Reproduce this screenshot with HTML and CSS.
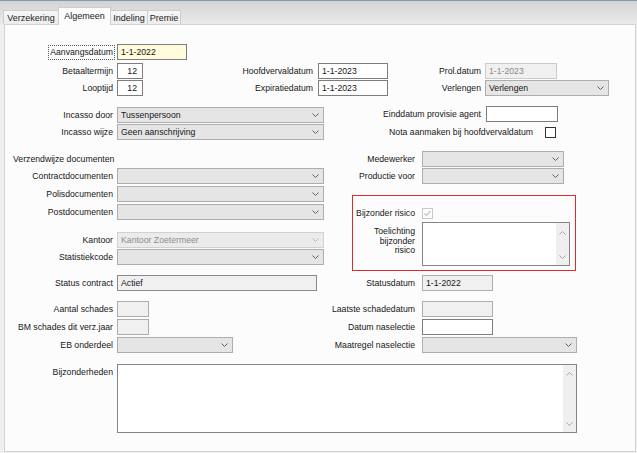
FILE: index.html
```html
<!DOCTYPE html>
<html>
<head>
<meta charset="utf-8">
<link rel="stylesheet" href="styles.css">
</head>
<body>
<div class="tabstrip">
  <div class="tab w-verz">Verzekering</div>
  <div class="tab active w-alg">Algemeen</div>
  <div class="tab w-ind">Indeling</div>
  <div class="tab w-prem">Premie</div>
</div>
<div class="panel">
  <div class="grid-a">
    <div class="lbl lbl-focus"><span class="focus">Aanvangsdatum</span></div>
    <div><div class="inp yellow w70">1-1-2022</div></div>
    <div class="fill4"></div>

    <div class="lbl">Betaaltermijn</div>
    <div><div class="inp num w26">12</div></div>
    <div class="lbl pr5">Hoofdvervaldatum</div>
    <div><div class="inp w70">1-1-2023</div></div>
    <div class="lbl">Prol.datum</div>
    <div><div class="inp dis w72">1-1-2023</div></div>

    <div class="lbl">Looptijd</div>
    <div><div class="inp num w26">12</div></div>
    <div class="lbl pr5">Expiratiedatum</div>
    <div><div class="inp w70">1-1-2023</div></div>
    <div class="lbl">Verlengen</div>
    <div><div class="select w124"><span>Verlengen</span><svg width="7" height="4" viewBox="0 0 7 4"><path d="M0.5 0.5 L3.5 3.5 L6.5 0.5" fill="none" stroke="#606060"/></svg></div></div>
  </div>

  <div class="sec-b">
    <div class="grid-b">
      <div class="lbl">Incasso door</div>
      <div><div class="select w207"><span>Tussenpersoon</span><svg width="7" height="4" viewBox="0 0 7 4"><path d="M0.5 0.5 L3.5 3.5 L6.5 0.5" fill="none" stroke="#606060"/></svg></div></div>
      <div class="lbl">Incasso wijze</div>
      <div><div class="select w207"><span>Geen aanschrijving</span><svg width="7" height="4" viewBox="0 0 7 4"><path d="M0.5 0.5 L3.5 3.5 L6.5 0.5" fill="none" stroke="#606060"/></svg></div></div>
    </div>
    <div class="b-right">
      <div class="row-end r1"><span>Einddatum provisie agent</span><div class="inp w72"></div></div>
      <div class="row-end r2"><span>Nota aanmaken bij hoofdvervaldatum</span><div class="chk"></div></div>
    </div>
  </div>

  <div class="sec-c">
    <div class="c-left">
      <div class="heading">Verzendwijze documenten</div>
      <div class="frow mt1"><div class="lbl w112">Contractdocumenten</div><div class="select w207"><span></span><svg width="7" height="4" viewBox="0 0 7 4"><path d="M0.5 0.5 L3.5 3.5 L6.5 0.5" fill="none" stroke="#606060"/></svg></div></div>
      <div class="frow mt2"><div class="lbl w112">Polisdocumenten</div><div class="select w207"><span></span><svg width="7" height="4" viewBox="0 0 7 4"><path d="M0.5 0.5 L3.5 3.5 L6.5 0.5" fill="none" stroke="#606060"/></svg></div></div>
      <div class="frow mt2"><div class="lbl w112">Postdocumenten</div><div class="select w207"><span></span><svg width="7" height="4" viewBox="0 0 7 4"><path d="M0.5 0.5 L3.5 3.5 L6.5 0.5" fill="none" stroke="#606060"/></svg></div></div>
      <div class="frow mt12"><div class="lbl w112">Kantoor</div><div class="select dis w207"><span>Kantoor Zoetermeer</span><svg width="7" height="4" viewBox="0 0 7 4"><path d="M0.5 0.5 L3.5 3.5 L6.5 0.5" fill="none" stroke="#b8b8b8"/></svg></div></div>
      <div class="frow mt1"><div class="lbl w112">Statistiekcode</div><div class="select w207"><span></span><svg width="7" height="4" viewBox="0 0 7 4"><path d="M0.5 0.5 L3.5 3.5 L6.5 0.5" fill="none" stroke="#606060"/></svg></div></div>
      <div class="frow mt10"><div class="lbl w112">Status contract</div><div class="inp ro dark w200">Actief</div></div>
    </div>
    <div class="c-right">
      <div class="frow"><div class="lbl2">Medewerker</div><div class="select w142"><span></span><svg width="7" height="4" viewBox="0 0 7 4"><path d="M0.5 0.5 L3.5 3.5 L6.5 0.5" fill="none" stroke="#606060"/></svg></div></div>
      <div class="frow mt1"><div class="lbl2">Productie voor</div><div class="select w142"><span></span><svg width="7" height="4" viewBox="0 0 7 4"><path d="M0.5 0.5 L3.5 3.5 L6.5 0.5" fill="none" stroke="#606060"/></svg></div></div>
      <div class="redbox">
        <div class="rb-row"><div class="lbl3">Bijzonder risico</div><div class="chk dis-chk"><svg width="9" height="9" viewBox="0 0 9 9"><path d="M1.5 4.5 L3.5 6.5 L7.5 2" fill="none" stroke="#c2c2c2" stroke-width="1.2"/></svg></div></div>
        <div class="rb-row2"><div class="lbl3 multi">Toelichting<br>bijzonder<br>risico</div>
          <div class="ta w148 h44"><div class="ta-body"></div><div class="sb sb-small"><svg width="7" height="4" viewBox="0 0 7 4"><path d="M0.5 3.5 L3.5 0.5 L6.5 3.5" fill="none" stroke="#a8a8a8"/></svg><svg width="7" height="4" viewBox="0 0 7 4"><path d="M0.5 0.5 L3.5 3.5 L6.5 0.5" fill="none" stroke="#a8a8a8"/></svg></div></div>
        </div>
      </div>
      <div class="frow mt4"><div class="lbl2">Statusdatum</div><div class="inp ro w71">1-1-2022</div></div>
    </div>
  </div>

  <div class="grid-d">
    <div class="lbl">Aantal schades</div>
    <div><div class="inp ro w32"></div></div>
    <div class="lbl2">Laatste schadedatum</div>
    <div><div class="inp ro w71"></div></div>

    <div class="lbl">BM schades dit verz.jaar</div>
    <div><div class="inp ro w32"></div></div>
    <div class="lbl2">Datum naselectie</div>
    <div><div class="inp w71"></div></div>

    <div class="lbl">EB onderdeel</div>
    <div><div class="select w116"><span></span><svg width="7" height="4" viewBox="0 0 7 4"><path d="M0.5 0.5 L3.5 3.5 L6.5 0.5" fill="none" stroke="#606060"/></svg></div></div>
    <div class="lbl2">Maatregel naselectie</div>
    <div><div class="select w155"><span></span><svg width="7" height="4" viewBox="0 0 7 4"><path d="M0.5 0.5 L3.5 3.5 L6.5 0.5" fill="none" stroke="#606060"/></svg></div></div>
  </div>

  <div class="sec-e">
    <div class="lbl w112 top">Bijzonderheden</div>
    <div class="ta w460 h69"><div class="ta-body"></div><div class="sb"><svg width="7" height="4" viewBox="0 0 7 4"><path d="M0.5 3.5 L3.5 0.5 L6.5 3.5" fill="none" stroke="#a8a8a8"/></svg><svg width="7" height="4" viewBox="0 0 7 4"><path d="M0.5 0.5 L3.5 3.5 L6.5 0.5" fill="none" stroke="#a8a8a8"/></svg></div></div>
  </div>
</div>
</body>
</html>
```

FILE: styles.css
```css
* { box-sizing: border-box; }
html, body { margin: 0; padding: 0; }
body {
  width: 637px;
  height: 453px;
  overflow: hidden;
  background: #efefef;
  font-family: "Liberation Sans", Arial, sans-serif;
  font-size: 8.7px;
  color: #161616;
}

/* tabs */
.tabstrip {
  height: 24px;
  border-top: 1px solid #8299b8;
  background: linear-gradient(#d3d3d3, #eaeaea);
  display: flex;
  align-items: flex-end;
  padding-left: 3px;
}
.tab {
  height: 14px;
  border: 1px solid #cdcdcd;
  border-bottom: none;
  background: linear-gradient(#f7f7f7, #ececec);
  display: flex;
  align-items: center;
  justify-content: center;
  color: #222;
  font-size: 9px;
}
.tab.active {
  height: 18px;
  margin-bottom: -1px;
  background: #fcfcfc;
  align-items: flex-start;
  padding-top: 3px;
  position: relative;
  z-index: 1;
}
.w-verz { width: 56px; }
.w-alg { width: 53px; margin-left: -1px; }
.w-ind { width: 38px; margin-left: -1px; }
.w-prem { width: 34px; margin-left: -1px; }

.panel {
  margin-left: 4px;
  width: 632px;
  height: 428px;
  border: 1px solid #d3d3d3;
  background: #fcfcfc;
}

/* generic controls */
.lbl {
  height: 16px;
  display: flex;
  align-items: center;
  justify-content: flex-end;
  padding-right: 4px;
  white-space: nowrap;
}
.lbl.pr5 { padding-right: 5px; }
.lbl.top { align-items: flex-start; padding-top: 3px; height: auto; }
.lbl2 {
  width: 98px;
  height: 16px;
  display: flex;
  align-items: center;
  justify-content: flex-end;
  padding-right: 7px;
  white-space: nowrap;
}
.lbl-focus { padding-right: 2px; }
.focus {
  display: inline-flex;
  align-items: center;
  height: 15px;
  padding: 0 1px;
  border: 1px dotted #5a5a5a;
}

.inp {
  height: 16px;
  border: 1px solid #7d7d7d;
  background: #fff;
  display: flex;
  align-items: center;
  padding: 0 3px;
  white-space: nowrap;
}
.inp.yellow { background: #fffbdb; }
.inp.num { justify-content: flex-end; padding-right: 5px; }
.inp.dis { background: #f0f0f0; border-color: #cbcbcb; color: #8a8a8a; }
.inp.ro { background: #f0f0f0; border-color: #adadad; }
.inp.ro.dark { border-color: #8a8a8a; }

.select {
  height: 16px;
  border: 1px solid #adadad;
  background: #e5e5e5;
  display: flex;
  align-items: center;
  justify-content: space-between;
  padding: 0 4px 0 3px;
  white-space: nowrap;
}
.select.dis { background: #ebebeb; border-color: #d0d0d0; color: #8d8d8d; }

.chk {
  width: 11px;
  height: 11px;
  border: 1px solid #333;
  background: #fff;
  display: flex;
  align-items: center;
  justify-content: center;
}
.chk.dis-chk { border-color: #c8c8c8; background: #fcfcfc; }

.ta {
  display: flex;
  border: 1px solid #858585;
  background: #fff;
}
.ta-body { flex: 1; }
.sb {
  width: 13px;
  background: #efefef;
  display: flex;
  flex-direction: column;
  justify-content: space-between;
  align-items: center;
  padding: 7px 0 6px;
}
.sb-small { padding: 8px 0 6px; }

/* widths */
.w26 { width: 26px; }
.w32 { width: 32px; }
.w70 { width: 70px; }
.w71 { width: 71px; }
.w72 { width: 72px; }
.w112 { width: 112px; flex: none; }
.w116 { width: 116px; }
.w124 { width: 124px; }
.w142 { width: 142px; }
.w148 { width: 148px; }
.w155 { width: 155px; }
.w200 { width: 200px; }
.w207 { width: 207px; }
.w460 { width: 460px; }
.h44 { height: 44px; }
.h69 { height: 69px; }

.mt1 { margin-top: 1px; }
.mt2 { margin-top: 2px; }
.mt4 { margin-top: 4px; }
.mt10 { margin-top: 10px; }
.mt12 { margin-top: 12px; }

/* section A */
.grid-a {
  margin-top: 19px;
  display: grid;
  grid-template-columns: 112px 70px 131px 70px 97px 125px;
  grid-template-rows: 19px 17px 16px;
}
.fill4 { grid-column: span 4; }

/* section B */
.sec-b {
  margin-top: 11px;
  display: flex;
}
.grid-b {
  display: grid;
  grid-template-columns: 112px 207px;
  grid-template-rows: 17px 16px;
}
.b-right {
  width: 234px;
  display: flex;
  flex-direction: column;
}
.row-end {
  display: flex;
  justify-content: flex-end;
  align-items: center;
  white-space: nowrap;
}
.r1 { height: 16px; margin-top: -1px; gap: 5px; }
.r2 { height: 16px; margin-top: 2px; gap: 12px; padding-right: 2px; }

/* section C */
.sec-c {
  margin-top: 11px;
  display: flex;
}
.c-left {
  width: 319px;
  display: flex;
  flex-direction: column;
}
.c-right {
  display: flex;
  flex-direction: column;
}
.heading {
  height: 16px;
  display: flex;
  align-items: center;
  padding-left: 8px;
}
.frow {
  display: flex;
  height: 16px;
}
.redbox {
  margin-top: 11px;
  margin-left: 28px;
  width: 224px;
  height: 76px;
  border: 1px solid #df2a2e;
  padding-top: 11px;
}
.rb-row {
  display: flex;
  height: 12px;
  align-items: center;
}
.rb-row2 {
  display: flex;
  margin-top: 3px;
}
.lbl3 {
  width: 69px;
  padding-right: 7px;
  text-align: right;
  white-space: nowrap;
}
.lbl3.multi {
  line-height: 9.5px;
  padding-top: 5px;
}

/* section D */
.grid-d {
  margin-top: 10px;
  display: grid;
  grid-template-columns: 112px 207px 98px auto;
  grid-template-rows: 18px 18px 16px;
}

/* section E */
.sec-e {
  margin-top: 11px;
  display: flex;
}
```
